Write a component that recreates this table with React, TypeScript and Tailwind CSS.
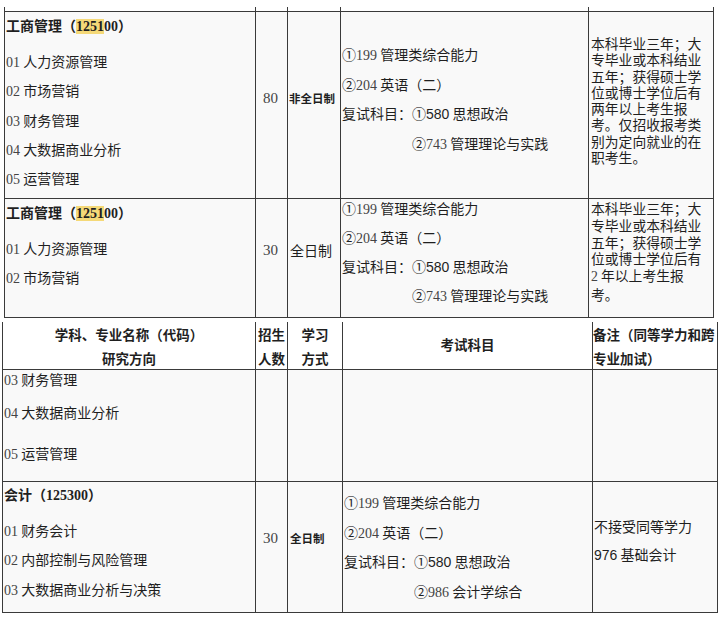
const serif = "font-['Liberation_Serif','Noto_Sans_CJK_SC',serif] text-[#444]";
const sans = "font-['Liberation_Sans','Noto_Sans_CJK_SC',sans-serif]";

function Num({ children }: { children: React.ReactNode }) {
  return <span className={serif}>{children}</span>;
}

function Item({ no, name }: { no: string; name: string }) {
  return (
    <div className="h-[29.25px] leading-[29.25px] whitespace-nowrap">
      <Num>{no}</Num> {name}
    </div>
  );
}

function Title({ name, code, mark }: { name: string; code: string; mark?: boolean }) {
  return (
    <div className="h-[24px] leading-[24px] font-bold whitespace-nowrap">
      {name}（
      <span className="font-['Liberation_Serif','Noto_Sans_CJK_SC',serif]">
        {mark ? (
          <>
            <span className="bg-[#f5d978]">1251</span>
            {code.slice(4)}
          </>
        ) : (
          code
        )}
      </span>
      ）
    </div>
  );
}

function Exam({ second, line }: { second: [string, string, string?]; line: string }) {
  return (
    <>
      <div className={`${line} whitespace-nowrap`}>
        ①<Num>199</Num> 管理类综合能力
      </div>
      <div className={`${line} whitespace-nowrap`}>
        ②<Num>204</Num> 英语（二）
      </div>
      <div className={`${line} whitespace-nowrap`}>
        复试科目：①<span className={sans}>580</span> 思想政治
      </div>
      <div className={`${line} whitespace-nowrap pl-[70px]`}>
        ②<Num>{second[0]}</Num>
        {second[2] ?? " "}
        {second[1]}
      </div>
    </>
  );
}

const cell = "border-r border-b border-[#3a3a3a] bg-[#f9f9f9] overflow-hidden";

export default function App() {
  return (
    <div className="w-[721px] h-[623px] bg-white text-[14px] text-[#1f1f1f] font-['Noto_Sans_CJK_SC',sans-serif] overflow-hidden">
      {/* upper table */}
      <div className="ml-[4px] mt-[7px] w-[709px] grid grid-cols-[251px_32px_53px_248px_125px] grid-rows-[5px_187px_119px] border-l border-[#3a3a3a]">
        <div className="border-r border-b border-[#3a3a3a]" />
        <div className="border-r border-b border-[#3a3a3a]" />
        <div className="border-r border-b border-[#3a3a3a]" />
        <div className="border-r border-b border-[#3a3a3a]" />
        <div className="border-r border-b border-[#3a3a3a]" />

        {/* row 1 */}
        <div className={`${cell} pl-px pt-px`}>
          <Title name="工商管理" code="125100" mark />
          <div className="mt-[10px]">
            <Item no="01" name="人力资源管理" />
            <Item no="02" name="市场营销" />
            <Item no="03" name="财务管理" />
            <Item no="04" name="大数据商业分析" />
            <Item no="05" name="运营管理" />
          </div>
        </div>
        <div className={`${cell} flex items-center justify-center pb-[13px] pr-[2px]`}>
          <span className={`${serif} text-[15px]`}>80</span>
        </div>
        <div className={`${cell} flex items-center pl-px pb-[13px] text-[11.5px] font-bold whitespace-nowrap`}>
          非全日制
        </div>
        <div className={`${cell} pl-px pt-[28px]`}>
          <Exam second={["743", "管理理论与实践"]} line="h-[29.5px] leading-[29.5px]" />
        </div>
        <div className={`${cell} pl-[2px] pt-[23px] leading-[16.25px] text-[13.8px] whitespace-nowrap`}>
          <div>本科毕业三年；大</div>
          <div>专毕业或本科结业</div>
          <div>五年；获得硕士学</div>
          <div>位或博士学位后有</div>
          <div>两年以上考生报</div>
          <div>考。仅招收报考类</div>
          <div>别为定向就业的在</div>
          <div>职考生。</div>
        </div>

        {/* row 2 */}
        <div className={`${cell} pl-px pt-px`}>
          <Title name="工商管理" code="125100" mark />
          <div className="mt-[10px]">
            <Item no="01" name="人力资源管理" />
            <Item no="02" name="市场营销" />
          </div>
        </div>
        <div className={`${cell} flex items-center justify-center pb-[15px] pr-[2px]`}>
          <span className={`${serif} text-[15px]`}>30</span>
        </div>
        <div className={`${cell} flex items-center pl-[2px] pb-[15px] whitespace-nowrap`}>全日制</div>
        <div className={`${cell} pl-px`}>
          <div className="-mt-[5px]">
            <Exam second={["743", "管理理论与实践"]} line="h-[29px] leading-[29px]" />
          </div>
        </div>
        <div className={`${cell} pl-[2px] pt-px leading-[16.8px] text-[13.8px] whitespace-nowrap`}>
          <div>本科毕业三年；大</div>
          <div>专毕业或本科结业</div>
          <div>五年；获得硕士学</div>
          <div>位或博士学位后有</div>
          <div>
            <Num>2</Num> 年以上考生报
          </div>
          <div>考。</div>
        </div>
      </div>

      {/* lower table */}
      <div className="ml-[2px] mt-[4px] w-[715px] grid grid-cols-[253px_32px_55px_250px_125px] grid-rows-[48px_112px_131px] border-l border-[#3a3a3a]">
        {/* header */}
        <div className="border-r border-b border-[#3a3a3a] bg-white text-[13.5px] font-bold text-center">
          <div className="h-[24px] leading-[24px]">学科、专业名称（代码）</div>
          <div className="h-[24px] leading-[24px]">研究方向</div>
        </div>
        <div className="border-r border-b border-[#3a3a3a] bg-white text-[13.5px] font-bold text-center">
          <div className="h-[24px] leading-[24px]">招生</div>
          <div className="h-[24px] leading-[24px]">人数</div>
        </div>
        <div className="border-r border-b border-[#3a3a3a] bg-white text-[13.5px] font-bold text-center">
          <div className="h-[24px] leading-[24px]">学习</div>
          <div className="h-[24px] leading-[24px]">方式</div>
        </div>
        <div className="border-r border-b border-[#3a3a3a] bg-white text-[13.5px] font-bold flex items-center justify-center pb-[2px]">
          考试科目
        </div>
        <div className="border-r border-b border-[#3a3a3a] bg-white text-[13.5px] font-bold whitespace-nowrap">
          <div className="h-[24px] leading-[24px]">备注（同等学力和跨</div>
          <div className="h-[24px] leading-[24px]">专业加试）</div>
        </div>

        {/* continued rows */}
        <div className={`${cell} pl-px`}>
          <div className="h-[18px] leading-[18px]">
            <Num>03</Num> 财务管理
          </div>
          <div className="mt-[15px] h-[18px] leading-[18px]">
            <Num>04</Num> 大数据商业分析
          </div>
          <div className="mt-[23px] h-[18px] leading-[18px]">
            <Num>05</Num> 运营管理
          </div>
        </div>
        <div className={cell} />
        <div className={cell} />
        <div className={cell} />
        <div className={cell} />

        {/* accounting */}
        <div className={`${cell} pl-px`}>
          <div className="h-[24px] leading-[24px] font-bold whitespace-nowrap">
            会计（<span className="font-['Liberation_Serif','Noto_Sans_CJK_SC',serif]">125300</span>）
          </div>
          <div className="mt-[10px]">
            <Item no="01" name="财务会计" />
            <Item no="02" name="内部控制与风险管理" />
            <Item no="03" name="大数据商业分析与决策" />
          </div>
        </div>
        <div className={`${cell} flex items-center justify-center pb-[17px] pr-[2px]`}>
          <span className={`${serif} text-[15px]`}>30</span>
        </div>
        <div className={`${cell} flex items-center pl-[2px] pb-[17px] text-[11.5px] font-bold whitespace-nowrap`}>
          全日制
        </div>
        <div className={`${cell} pl-px pt-[6px]`}>
          <Exam second={["986", "会计学综合", "  "]} line="h-[29.5px] leading-[29.5px]" />
        </div>
        <div className={`${cell} pl-px pt-[30px] whitespace-nowrap`}>
          <div className="h-[28px] leading-[28px]">不接受同等学力</div>
          <div className="h-[28px] leading-[28px]">
            <span className={sans}>976</span> 基础会计
          </div>
        </div>
      </div>
    </div>
  );
}
